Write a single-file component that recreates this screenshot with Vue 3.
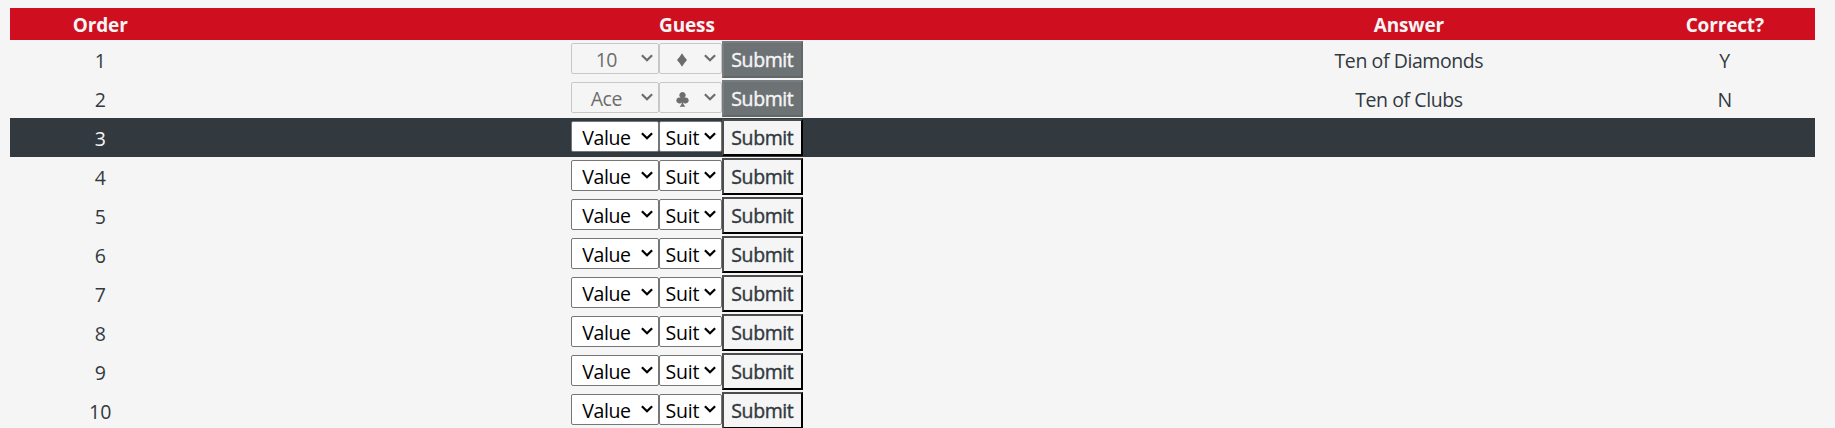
<script setup>
const rows = [
  { n: 1, value: '10', suit: 'diamond', answer: 'Ten of Diamonds', correct: 'Y', done: true },
  { n: 2, value: 'Ace', suit: 'club', answer: 'Ten of Clubs', correct: 'N', done: true },
  ...[3, 4, 5, 6, 7, 8, 9, 10].map((n) => ({ n, value: 'Value', suit: '', active: n === 3 })),
]
</script>

<template>
  <div class="table">
    <div class="row head">
      <div>Order</div>
      <div>Guess</div>
      <div>Answer</div>
      <div>Correct?</div>
    </div>
    <div v-for="r in rows" :key="r.n" class="row" :class="{ active: r.active, done: r.done }">
      <div class="cell">{{ r.n }}</div>
      <div class="guess">
        <div class="select value">
          <span class="label">{{ r.value }}</span>
          <svg class="chevron" width="12" height="8" viewBox="0 0 12 8"><path d="M.9 1.200 6 6.200 11.100 1.200" /></svg>
        </div>
        <div class="select suit">
          <span class="label">
            <svg v-if="r.suit === 'diamond'" class="pip" width="12" height="14" viewBox="0 0 12 14"><path d="M6 .2C7.500 2.600 9 4.900 11 7 9 9.100 7.500 11.400 6 13.800 4.500 11.400 3 9.100 1 7 3 4.900 4.500 2.600 6 .2Z" /></svg>
            <svg v-else-if="r.suit === 'club'" class="pip" width="13" height="15" viewBox="0 0 12 14"><path d="M6 0a2.9 2.9 0 0 1 2.3 4.7c-.2.3-.4.5-.6.7A2.8 2.8 0 1 1 9 10.7c-1.100 0-1.900-.5-2.400-1.200.1 1.700.6 2.900 1.900 3.700v.6h-5v-.6c1.300-.8 1.800-2 1.900-3.700-.5.700-1.300 1.200-2.400 1.200A2.800 2.800 0 1 1 4.300 5.400c-.2-.2-.4-.4-.6-.7A2.900 2.900 0 0 1 6 0Z" /></svg>
            <template v-else>Suit</template>
          </span>
          <svg class="chevron" width="12" height="8" viewBox="0 0 12 8"><path d="M.9 1.200 6 6.200 11.100 1.200" /></svg>
        </div>
        <button class="submit" :disabled="r.done">Submit</button>
      </div>
      <div class="cell answer">{{ r.answer }}</div>
      <div class="cell">{{ r.correct }}</div>
    </div>
  </div>
</template>

<style>
html {
  background: #f5f5f5;
  overflow: hidden;
}
</style>

<style scoped>
.table {
  box-sizing: border-box;
  width: 1825px;
  height: 428px;
  padding: 8px 10px 0;
  overflow: hidden;
  background: #f5f5f5;
  color: #32393f;
  font: 19.5px/30px "Open Sans", "Noto Sans", sans-serif;
  text-align: center;
}
.row {
  display: grid;
  grid-template-columns: 10% 55% 25% 10%;
  height: 39px;
  align-items: center;
}
.head {
  height: 32px;
  padding-top: 2px;
  box-sizing: border-box;
  background: #cf0f1f;
  color: #f5f5f5;
  font-weight: 700;
  font-size: 19px;
  letter-spacing: -0.15px;
}
.active {
  background: #32393f;
  color: #f5f5f5;
}
.cell {
  padding-top: 2px;
}
.answer {
  letter-spacing: -0.42px;
}
.guess {
  display: flex;
  justify-content: center;
  align-items: flex-start;
  height: 37px;
}
.select {
  box-sizing: border-box;
  display: flex;
  align-items: center;
  justify-content: space-between;
  height: 31px;
  margin-top: 2px;
  padding-right: 5px;
  border: 1px solid #767676;
  border-radius: 2px;
  background: #fff;
  color: #000;
}
.value {
  width: 88px;
  letter-spacing: -0.4px;
}
.suit {
  width: 63px;
  letter-spacing: -0.2px;
}
.label {
  flex: 1;
  height: 29px;
  line-height: 31px;
}
.suit .label {
  padding-left: 1px;
}
.chevron {
  flex: none;
  margin-top: -1px;
  fill: none;
  stroke: currentColor;
  stroke-width: 2.3;
}
.pip {
  display: block;
  margin: 9px auto 0;
  fill: currentColor;
}
.submit {
  box-sizing: border-box;
  width: 81px;
  height: 37px;
  padding: 0;
  border: 2px solid;
  border-color: #4c4c4c #000 #000 #4c4c4c;
  background: #f5f5f5;
  color: #32393f;
  font: 500 19.5px/31px "Open Sans", "Noto Sans", sans-serif;
  letter-spacing: -0.4px;
  -webkit-text-stroke: 0.4px currentColor;
}
.done .select {
  border-color: #c8c8c8;
  background: #f5f5f5;
  color: #6d6d6d;
}
.done .submit {
  border-color: #787d80 #62676a #62676a #787d80;
  background: #6d7275;
  color: #f5f5f5;
}
</style>
